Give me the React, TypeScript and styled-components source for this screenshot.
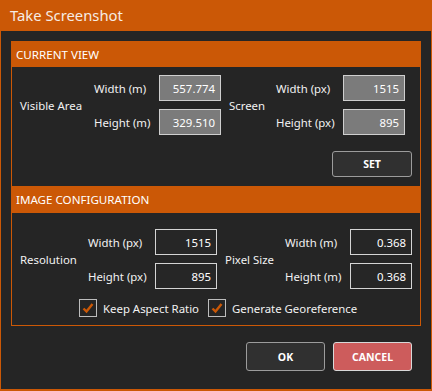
import React from "react";
import styled, { createGlobalStyle } from "styled-components";

const ORANGE = "#cb5806";
const BG = "#252525";

const Global = createGlobalStyle`
  html, body { margin: 0; padding: 0; background: ${BG}; }
  body { font-family: "Noto Sans", "Open Sans", sans-serif; }
`;

const Window = styled.div`
  width: 432px;
  height: 391px;
  box-sizing: border-box;
  background: ${BG};
  border: 1px solid ${ORANGE};
  border-top: 0;
  border-bottom-width: 2px;
  display: flex;
  flex-direction: column;
`;

const TitleBar = styled.div`
  height: 31px;
  margin: 0 -1px;
  background: ${ORANGE};
  color: #f6ece4;
  font-size: 14.8px;
  display: flex;
  align-items: center;
  padding-left: 10px;
  padding-bottom: 1px;
  box-sizing: border-box;
`;

const Body = styled.div`
  padding: 10px 10px 0 10px;
  display: flex;
  flex-direction: column;
`;

const Panel = styled.div`
  border: 1px solid ${ORANGE};
  display: flex;
  flex-direction: column;
`;

const Header = styled.div<{ $h: number }>`
  height: ${(p) => p.$h}px;
  background: ${ORANGE};
  color: #fff;
  font-size: 11.6px;
  display: flex;
  align-items: center;
  padding-left: 4px;
  box-sizing: border-box;
`;

const Section = styled.div<{ $h: number; $pt: number }>`
  height: ${(p) => p.$h}px;
  padding: ${(p) => p.$pt}px 0 0 8px;
  box-sizing: border-box;
  display: flex;
  flex-direction: column;
`;

const FieldGrid = styled.div<{ $cols: string }>`
  display: grid;
  grid-template-columns: ${(p) => p.$cols};
  grid-template-rows: 26px 26px;
  row-gap: 8px;
  align-items: center;
  color: #f2f2f2;
  font-size: 11.4px;
`;

const GroupLabel = styled.div<{ $c: number }>`
  grid-column: ${(p) => p.$c};
  grid-row: 1 / span 2;
  align-self: center;
  white-space: nowrap;
`;

const FieldLabel = styled.div<{ $c: number; $r: number }>`
  grid-column: ${(p) => p.$c};
  grid-row: ${(p) => p.$r};
  white-space: nowrap;
`;

const Input = styled.div<{ $c: number; $r: number; $readonly?: boolean }>`
  grid-column: ${(p) => p.$c};
  grid-row: ${(p) => p.$r};
  width: 62px;
  height: 26px;
  box-sizing: border-box;
  border: 1px solid ${(p) => (p.$readonly ? "#cfcfcf" : "#d4d4d4")};
  background: ${(p) => (p.$readonly ? "#7b7b7b" : "#262626")};
  color: #fff;
  font-size: 11.4px;
  display: flex;
  align-items: center;
  justify-content: flex-end;
  padding-right: 5px;
`;

const ButtonRow = styled.div<{ $mt: number; $pr: number }>`
  display: flex;
  justify-content: flex-end;
  gap: 8px;
  margin-top: ${(p) => p.$mt}px;
  padding-right: ${(p) => p.$pr}px;
`;

const Button = styled.div<{ $danger?: boolean; $w: number; $h: number }>`
  width: ${(p) => p.$w}px;
  height: ${(p) => p.$h}px;
  box-sizing: border-box;
  border-radius: 3px;
  border: 1px solid ${(p) => (p.$danger ? "#d8d8d8" : "#9c9c9c")};
  background: ${(p) => (p.$danger ? "#cd5c5c" : "#303030")};
  color: #fff;
  font-size: 10.5px;
  font-weight: 700;
  display: flex;
  align-items: center;
  justify-content: center;
`;

const CheckRow = styled.div`
  display: flex;
  align-items: center;
  margin-top: 10px;
  padding-left: 59px;
  color: #f2f2f2;
  font-size: 11.4px;
`;

const CheckItem = styled.label`
  display: flex;
  align-items: center;
  gap: 6px;
  margin-right: 9px;
`;

const Box = styled.span`
  width: 18px;
  height: 18px;
  box-sizing: border-box;
  border: 1px solid #bdbdbd;
  display: flex;
  align-items: center;
  justify-content: center;
`;

const Check = () => (
  <svg width="12" height="12" viewBox="0 0 12 12">
    <path d="M1.5 6.5 L4.5 9.5 L10.5 2" fill="none" stroke={ORANGE} strokeWidth="2.4" />
  </svg>
);

export default function App() {
  return (
    <>
      <Global />
      <Window>
        <TitleBar>Take Screenshot</TitleBar>
        <Body>
          <Panel>
            <Header $h={25}>CURRENT VIEW</Header>
            <Section $h={119} $pt={8}>
              <FieldGrid $cols="74px 65px 70px 47px 67px 62px">
                <GroupLabel $c={1}>Visible Area</GroupLabel>
                <FieldLabel $c={2} $r={1}>Width (m)</FieldLabel>
                <Input $c={3} $r={1} $readonly>557.774</Input>
                <FieldLabel $c={2} $r={2}>Height (m)</FieldLabel>
                <Input $c={3} $r={2} $readonly>329.510</Input>
                <GroupLabel $c={4}>Screen</GroupLabel>
                <FieldLabel $c={5} $r={1}>Width (px)</FieldLabel>
                <Input $c={6} $r={1} $readonly>1515</Input>
                <FieldLabel $c={5} $r={2}>Height (px)</FieldLabel>
                <Input $c={6} $r={2} $readonly>895</Input>
              </FieldGrid>
              <ButtonRow $mt={16} $pr={8}>
                <Button $w={80} $h={26}>SET</Button>
              </ButtonRow>
            </Section>
            <Header $h={27}>IMAGE CONFIGURATION</Header>
            <Section $h={112} $pt={16}>
              <FieldGrid $cols="68px 67px 70px 60px 65px 62px">
                <GroupLabel $c={1}>Resolution</GroupLabel>
                <FieldLabel $c={2} $r={1}>Width (px)</FieldLabel>
                <Input $c={3} $r={1}>1515</Input>
                <FieldLabel $c={2} $r={2}>Height (px)</FieldLabel>
                <Input $c={3} $r={2}>895</Input>
                <GroupLabel $c={4}>Pixel Size</GroupLabel>
                <FieldLabel $c={5} $r={1}>Width (m)</FieldLabel>
                <Input $c={6} $r={1}>0.368</Input>
                <FieldLabel $c={5} $r={2}>Height (m)</FieldLabel>
                <Input $c={6} $r={2}>0.368</Input>
              </FieldGrid>
              <CheckRow>
                <CheckItem>
                  <Box><Check /></Box>
                  Keep Aspect Ratio
                </CheckItem>
                <CheckItem>
                  <Box><Check /></Box>
                  Generate Georeference
                </CheckItem>
              </CheckRow>
            </Section>
          </Panel>
          <ButtonRow $mt={16} $pr={9}>
            <Button $w={79} $h={29}>OK</Button>
            <Button $w={79} $h={29} $danger>CANCEL</Button>
          </ButtonRow>
        </Body>
      </Window>
    </>
  );
}
